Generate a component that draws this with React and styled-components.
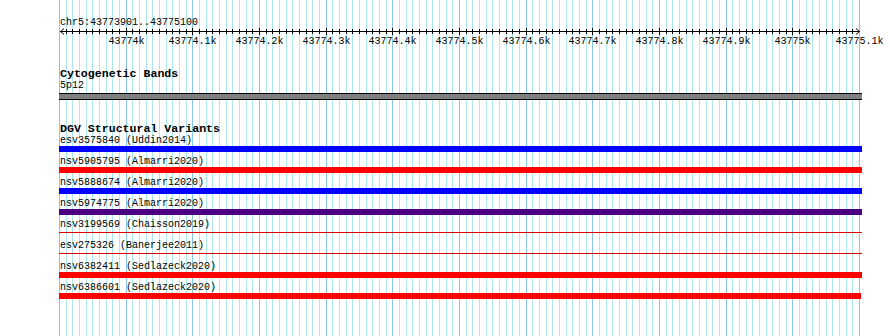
import React from 'react';
import styled, { createGlobalStyle } from 'styled-components';

// 1200 bp across 800 px, one grid line every 10 bp
const LEFT = 59;
const STEP = 20 / 3;
const TICKS = 120;
const START_KB = 43773.9;

const variants = [
  { name: 'esv3575840 (Uddin2014)', color: '#0000ff' },
  { name: 'nsv5905795 (Almarri2020)', color: '#ff0000' },
  { name: 'nsv5888674 (Almarri2020)', color: '#0000ff' },
  { name: 'nsv5974775 (Almarri2020)', color: '#4b0082' },
  { name: 'nsv3199569 (Chaisson2019)', color: '#e00000', thin: true },
  { name: 'esv275326 (Banerjee2011)', color: '#e00000', thin: true },
  { name: 'nsv6382411 (Sedlazeck2020)', color: '#ff0000' },
  { name: 'nsv6386601 (Sedlazeck2020)', color: '#ff0000', width: 802 },
];

const GlobalStyle = createGlobalStyle`
  html, body {
    margin: 0;
    padding: 0;
    background: #fff;
  }
`;

const Stage = styled.div`
  display: grid;
  width: 890px;
  height: 336px;
  overflow: hidden;
  background: #fff;
  font-family: "Liberation Mono", "DejaVu Sans Mono", monospace;
  color: #000;

  & > * {
    grid-area: 1 / 1;
  }
`;

const GridSvg = styled.svg`
  display: block;
`;

const Tracks = styled.div`
  display: flex;
  flex-direction: column;
  padding: 18px 0 0 ${LEFT}px;
`;

const Location = styled.div`
  font-size: 10px;
  line-height: 10px;
  padding-left: 1px;
  white-space: pre;
`;

const RulerSvg = styled.svg`
  display: block;
  overflow: visible;
`;

const Section = styled.section`
  display: flex;
  flex-direction: column;
  margin-top: ${p => p.$gap}px;
`;

const TrackTitle = styled.div`
  font-size: 11.6px;
  font-weight: bold;
  line-height: 12px;
  padding-left: 1px;
  white-space: pre;
`;

const FeatureLabel = styled.div`
  font-size: 10px;
  line-height: 12px;
  height: ${p => p.$height || 12}px;
  padding-left: 1px;
  white-space: pre;
`;

const Band = styled.div`
  width: 803px;
  height: 5px;
  margin-top: 1px;
  background: #808080;
  border-top: 1px solid #000;
  border-bottom: 1px solid #000;
`;

const Row = styled.div`
  display: flex;
  flex-direction: column;
  margin-bottom: 4px;
`;

const Bar = styled.div`
  width: ${p => p.$width || 803}px;
  height: 6px;
  background: ${p =>
    p.$thin
      ? `linear-gradient(transparent 2px, ${p.$color} 2px, ${p.$color} 3px, transparent 3px)`
      : p.$color};
`;

const gridX = k => Math.round(LEFT + k * STEP) + 0.5;

const Grid = () => (
  <GridSvg width="890" height="336">
    {Array.from({ length: TICKS + 1 }, (_, k) => (
      <line
        key={k}
        x1={gridX(k)}
        x2={gridX(k)}
        y1="0"
        y2="336"
        stroke={k % 10 === 0 ? '#88c6e8' : '#ade8ee'}
        strokeWidth="1"
      />
    ))}
  </GridSvg>
);

const Ruler = () => {
  const y = 3.5;
  const lx = k => gridX(k) - LEFT;
  const label = k => {
    const kb = Math.round((START_KB + k * 0.01) * 10) / 10;
    return `${Number.isInteger(kb) ? kb : kb.toFixed(1)}k`;
  };
  return (
    <RulerSvg width="806" height="20">
      <line x1="1" x2="801" y1={y} y2={y} stroke="#000" />
      <path d={`M5 ${y - 3} L1.5 ${y} L5 ${y + 3}`} fill="none" stroke="#000" />
      <path d={`M797 ${y - 3} L800.5 ${y} L797 ${y + 3}`} fill="none" stroke="#000" />
      {Array.from({ length: TICKS - 1 }, (_, i) => i + 1).map(k => (
        <line
          key={k}
          x1={lx(k)}
          x2={lx(k)}
          y1={k % 10 === 0 ? y - 3.5 : y - 2.5}
          y2={k % 10 === 0 ? y + 3.5 : y + 2.5}
          stroke="#000"
        />
      ))}
      {Array.from({ length: 12 }, (_, i) => (i + 1) * 10).map(k => (
        <text
          key={k}
          x={lx(k)}
          y="15.5"
          fontSize="10"
          fontFamily='"Liberation Mono", monospace'
          textAnchor="middle"
          fill="#000"
        >
          {label(k)}
        </text>
      ))}
    </RulerSvg>
  );
};

const App = () => (
  <>
    <GlobalStyle />
    <Stage>
      <Grid />
      <Tracks>
        <Location>chr5:43773901..43775100</Location>
        <Ruler />
        <Section $gap={20}>
          <TrackTitle>Cytogenetic Bands</TrackTitle>
          <FeatureLabel>5p12</FeatureLabel>
          <Band />
        </Section>
        <Section $gap={23}>
          <TrackTitle>DGV Structural Variants</TrackTitle>
          {variants.map(v => (
            <Row key={v.name}>
              <FeatureLabel $height={11}>{v.name}</FeatureLabel>
              <Bar $color={v.color} $thin={v.thin} $width={v.width} />
            </Row>
          ))}
        </Section>
      </Tracks>
    </Stage>
  </>
);

export default App;
